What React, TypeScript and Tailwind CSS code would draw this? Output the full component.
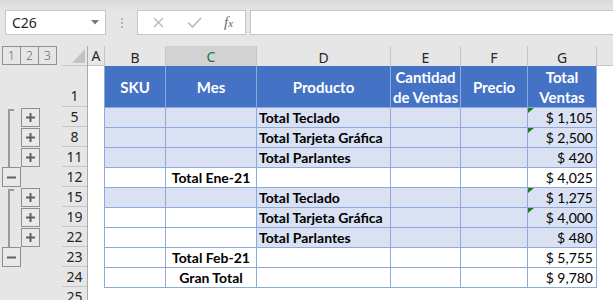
import React from 'react';

type Row = {
  n: number;
  bc: 'light' | 'white';
  dg: 'light' | 'white';
  c?: string;
  d?: string;
  g: string;
  flag?: boolean;
};

const rows: Row[] = [
  { n: 5, bc: 'light', dg: 'light', d: 'Total Teclado', g: '$ 1,105', flag: true },
  { n: 8, bc: 'light', dg: 'light', d: 'Total Tarjeta Gráfica', g: '$ 2,500', flag: true },
  { n: 11, bc: 'light', dg: 'light', d: 'Total Parlantes', g: '$ 420' },
  { n: 12, bc: 'white', dg: 'white', c: 'Total Ene-21', g: '$ 4,025' },
  { n: 15, bc: 'light', dg: 'light', d: 'Total Teclado', g: '$ 1,275', flag: true },
  { n: 19, bc: 'white', dg: 'light', d: 'Total Tarjeta Gráfica', g: '$ 4,000', flag: true },
  { n: 22, bc: 'white', dg: 'light', d: 'Total Parlantes', g: '$ 480' },
  { n: 23, bc: 'white', dg: 'white', c: 'Total Feb-21', g: '$ 5,755' },
  { n: 24, bc: 'white', dg: 'white', c: 'Gran Total', g: '$ 9,780' },
];

const cols = ['B', 'C', 'D', 'E', 'F', 'G'];

function bg(kind: 'light' | 'white') {
  return kind === 'light' ? 'bg-[#D9E1F2]' : 'bg-white';
}

function PlusBox() {
  return (
    <div className="ml-[21px] mt-px flex h-[19px] w-[19px] items-center justify-center border border-[#8f8f8f] bg-[#e9e9e9]">
      <svg width="11" height="11" viewBox="0 0 11 11">
        <path d="M1 5.5h9M5.5 1v9" stroke="#5f5f5f" strokeWidth="2" />
      </svg>
    </div>
  );
}

function MinusBox() {
  return (
    <div className="ml-[2px] flex h-[20px] w-[19px] items-center justify-center border border-[#8f8f8f] bg-[#e9e9e9]">
      <svg width="11" height="11" viewBox="0 0 11 11">
        <path d="M1 5.5h9" stroke="#5f5f5f" strokeWidth="2" />
      </svg>
    </div>
  );
}

function OutlineRow({ n }: { n: number }) {
  const first = n === 5 || n === 15;
  const minus = n === 12 || n === 23;
  if (n === 24) return <div className="h-[20px]" />;
  if (minus) {
    return (
      <div className="h-[20px]">
        <MinusBox />
      </div>
    );
  }
  return (
    <div className="flex h-[20px]">
      <div className="ml-[8px] w-[13px]">
        {first ? (
          <div className="mt-[2px] h-[18px] w-[6px] border-l-2 border-t-2 border-[#9a9a9a]" />
        ) : (
          <div className="h-[20px] w-[2px] bg-[#9a9a9a]" />
        )}
      </div>
      <div className="-ml-[21px]">
        <PlusBox />
      </div>
    </div>
  );
}

function Flag() {
  return (
    <svg className="absolute left-0 top-0" width="6" height="6" viewBox="0 0 6 6">
      <path d="M0 0h6L0 5z" fill="#1e7b1e" />
    </svg>
  );
}

export default function App() {
  return (
    <div className="h-[300px] w-[613px] overflow-hidden bg-[#e6e6e6] font-['Noto_Sans',sans-serif]">
      {/* formula bar */}
      <div className="flex h-[46px] items-start bg-gradient-to-b from-[#dadada] to-[#e6e6e6] to-[25%] pt-[10px]">
        <div className="ml-[5px] flex h-[25px] w-[101px] items-center justify-between border border-[#c6c6c6] bg-white pl-[6px] pr-[6px]">
          <span className="text-[14px] leading-none text-[#262626]">C26</span>
          <svg width="8" height="5" viewBox="0 0 8 5">
            <path d="M0 0h8L4 4.5z" fill="#7a7a7a" />
          </svg>
        </div>
        <div className="flex h-[25px] w-[31px] flex-col items-center justify-center gap-[2px]">
          <div className="h-[2px] w-[2px] bg-[#b4b4b4]" />
          <div className="h-[2px] w-[2px] bg-[#b4b4b4]" />
          <div className="h-[2px] w-[2px] bg-[#b4b4b4]" />
        </div>
        <div className="flex h-[25px] w-[109px] items-center border border-[#c6c6c6] bg-white">
          <svg className="ml-[15px]" width="11" height="11" viewBox="0 0 11 11">
            <path d="M1 1l9 9M10 1l-9 9" stroke="#b9b9b9" strokeWidth="1.4" />
          </svg>
          <svg className="ml-[23px]" width="15" height="11" viewBox="0 0 15 11">
            <path d="M1 5.5l4.5 4.5L14 1" stroke="#b9b9b9" strokeWidth="1.6" fill="none" />
          </svg>
          <span className="ml-[22px] font-['Liberation_Serif',serif] text-[15px] italic leading-none text-[#6a6a6a]">
            f<span className="text-[11px]">x</span>
          </span>
        </div>
        <div className="ml-[4px] h-[25px] flex-1 border-y border-l border-[#c6c6c6] bg-white" />
      </div>

      {/* sheet */}
      <div className="flex">
        {/* outline column */}
        <div className="w-[62px]">
          <div className="flex h-[20px] pl-[2px]">
            {['1', '2', '3'].map((l) => (
              <div
                key={l}
                className="-mr-px flex h-[19px] w-[19px] items-center justify-center border border-[#909090] text-[12px] font-light leading-none text-[#6a6a6a]"
              >
                {l}
              </div>
            ))}
          </div>
          <div className="h-[41px]" />
          {rows.map((r) => (
            <OutlineRow key={r.n} n={r.n} />
          ))}
        </div>

        {/* row headers */}
        <div className="w-[26px] border-r border-[#ababab]">
          <div className="flex h-[20px] items-end justify-end border-b border-[#c6c6c6] pb-[2px] pr-[2px]">
            <svg width="13" height="14" viewBox="0 0 13 14">
              <path d="M13 0v14H0z" fill="#c3c3c3" />
            </svg>
          </div>
          <div className="flex h-[41px] items-end justify-center border-b border-[#c6c6c6] text-[14px] leading-[20px] text-[#262626]">
            1
          </div>
          {rows.map((r) => (
            <div
              key={r.n}
              className="flex h-[20px] items-center justify-center border-b border-[#c6c6c6] text-[14px] leading-none text-[#262626]"
            >
              {r.n}
            </div>
          ))}
          <div className="flex h-[20px] items-center justify-center text-[14px] leading-none text-[#262626]">25</div>
        </div>

        {/* column A */}
        <div className="w-[16px]">
          <div className="flex h-[20px] items-center justify-center border-b border-[#c6c6c6] text-[14px] text-[#262626]">
            A
          </div>
          <div className="h-[300px] bg-white" />
        </div>

        {/* table */}
        <div className="w-[493px]">
          <div className="grid h-[20px] grid-cols-[60px_90px_133px_69px_66px_68px] gap-x-px bg-[#c6c6c6] px-px">
            {cols.map((c) =>
              c === 'C' ? (
                <div
                  key={c}
                  className="flex items-center justify-center border-b-2 border-[#217346] bg-[#d2d2d2] text-[14px] text-[#217346]"
                >
                  {c}
                </div>
              ) : (
                <div
                  key={c}
                  className="flex items-center justify-center border-b border-[#c6c6c6] bg-[#e6e6e6] text-[14px] text-[#262626]"
                >
                  {c}
                </div>
              )
            )}
          </div>
          <div className="grid grid-cols-[60px_90px_133px_69px_66px_68px] grid-rows-[41px_repeat(9,19px)] gap-px bg-[#8EA9DB] px-px pb-px font-['Lato',sans-serif] text-[14px] font-bold leading-[20px] text-black">
            {['SKU', 'Mes', 'Producto', 'Cantidad de Ventas', 'Precio', 'Total Ventas'].map((h) => (
              <div key={h} className="flex items-center justify-center bg-[#4472C4] px-[2px] text-center text-[15px] text-white">
                {h}
              </div>
            ))}
            {rows.map((r) => (
              <React.Fragment key={r.n}>
                <div className={bg(r.bc)} />
                <div className={`${bg(r.bc)} text-center`}>{r.c}</div>
                <div className={`${bg(r.dg)} pl-[2px] whitespace-nowrap`}>{r.d}</div>
                <div className={bg(r.dg)} />
                <div className={bg(r.dg)} />
                <div className={`${bg(r.dg)} relative pr-[3px] text-right font-normal`}>
                  {r.flag && <Flag />}
                  {r.g}
                </div>
              </React.Fragment>
            ))}
          </div>
          <div className="h-[40px] bg-white" />
        </div>

        {/* rest */}
        <div className="flex-1">
          <div className="h-[20px] border-b border-[#c6c6c6]" />
          <div className="h-[300px] bg-white" />
        </div>
      </div>
    </div>
  );
}
